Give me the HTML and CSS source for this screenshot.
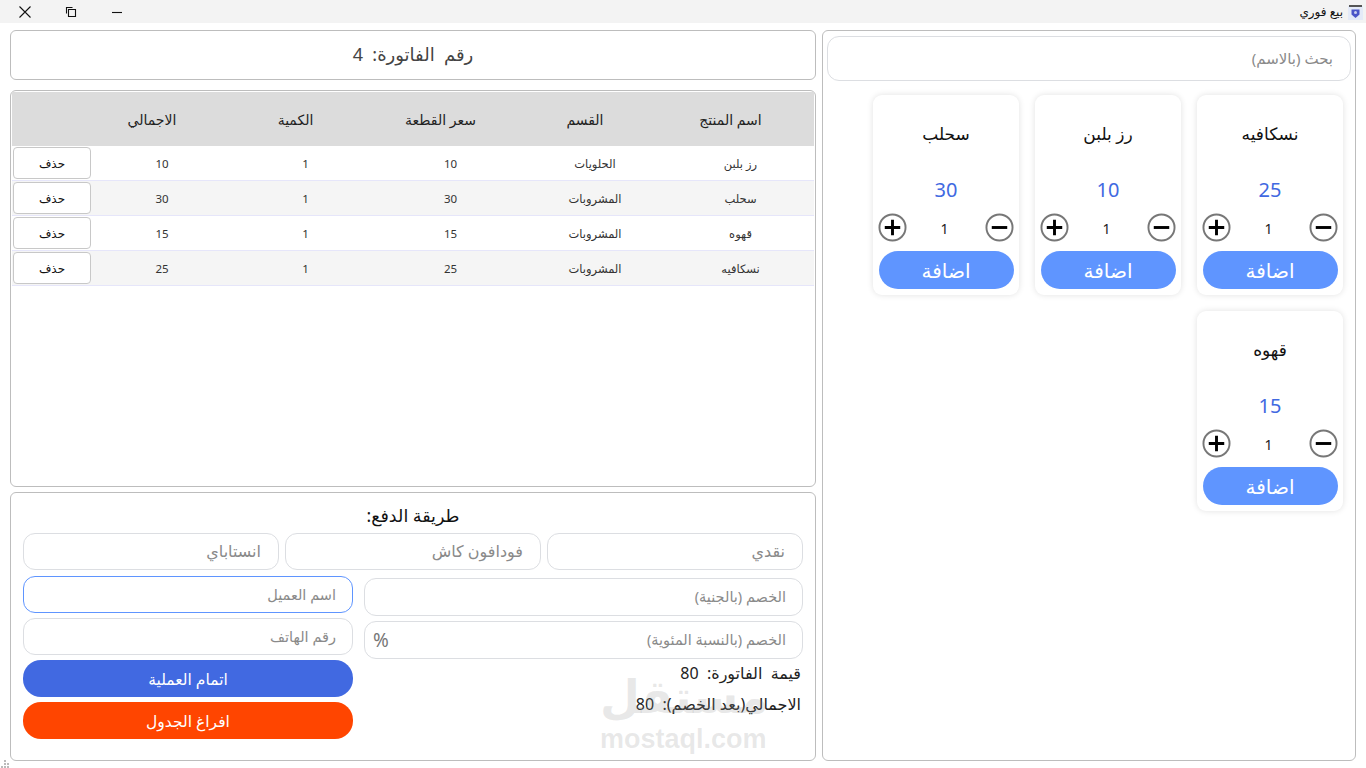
FILE: index.html
```html
<!DOCTYPE html>
<html lang="ar">
<head>
  <meta charset="UTF-8">
  <title>بيع فوري</title>
  <link rel="stylesheet" href="styles.css">
</head>
<body>
  <div class="titlebar">
    <div class="win-buttons">
      <svg class="win-icon" width="14" height="14" viewBox="0 0 14 14"><path d="M1.5 1.5l11 11M12.5 1.5l-11 11" stroke="#111" stroke-width="1.1" fill="none"/></svg>
      <svg class="win-icon" width="14" height="14" viewBox="0 0 14 14"><path d="M4.5 4.5h7v7h-7zM2.5 8.5v-6h6" stroke="#111" stroke-width="1.1" fill="none"/></svg>
      <svg class="win-icon" width="14" height="14" viewBox="0 0 14 14"><path d="M2 7.5h10" stroke="#111" stroke-width="1.1" fill="none"/></svg>
    </div>
    <div class="app-title">
      <span>بيع فوري</span>
      <svg width="15" height="16" viewBox="0 0 15 16"><rect x="0" y="2" width="15" height="14" fill="#e4eaf8"/><path d="M1 1h13v2H1z" fill="#555"/><path d="M3.5 5.5h8v5l-4 3.5-4-3.500z" fill="#4a55c8"/><circle cx="7.500" cy="8.500" r="1.500" fill="#c9cff0"/></svg>
    </div>
  </div>

  <div class="main">
    <div class="panel products">
      <input class="field search" type="text" placeholder="بحث (بالاسم)">
      <div class="card-grid">
        <div class="card">
          <div class="card-name">نسكافيه</div>
          <div class="card-price">25</div>
          <div class="qty-row">
            <svg class="qty-btn" viewBox="0 0 30 30"><circle cx="15" cy="15" r="13.5"/><path d="M7 15h16M15 7v16"/></svg>
            <span class="qty">1</span>
            <svg class="qty-btn" viewBox="0 0 30 30"><circle cx="15" cy="15" r="13.5"/><path d="M7 15h16"/></svg>
          </div>
          <button class="add-btn">اضافة</button>
        </div>
        <div class="card">
          <div class="card-name">رز بلبن</div>
          <div class="card-price">10</div>
          <div class="qty-row">
            <svg class="qty-btn" viewBox="0 0 30 30"><circle cx="15" cy="15" r="13.5"/><path d="M7 15h16M15 7v16"/></svg>
            <span class="qty">1</span>
            <svg class="qty-btn" viewBox="0 0 30 30"><circle cx="15" cy="15" r="13.5"/><path d="M7 15h16"/></svg>
          </div>
          <button class="add-btn">اضافة</button>
        </div>
        <div class="card">
          <div class="card-name">سحلب</div>
          <div class="card-price">30</div>
          <div class="qty-row">
            <svg class="qty-btn" viewBox="0 0 30 30"><circle cx="15" cy="15" r="13.5"/><path d="M7 15h16M15 7v16"/></svg>
            <span class="qty">1</span>
            <svg class="qty-btn" viewBox="0 0 30 30"><circle cx="15" cy="15" r="13.5"/><path d="M7 15h16"/></svg>
          </div>
          <button class="add-btn">اضافة</button>
        </div>
        <div class="card">
          <div class="card-name">قهوه</div>
          <div class="card-price">15</div>
          <div class="qty-row">
            <svg class="qty-btn" viewBox="0 0 30 30"><circle cx="15" cy="15" r="13.5"/><path d="M7 15h16M15 7v16"/></svg>
            <span class="qty">1</span>
            <svg class="qty-btn" viewBox="0 0 30 30"><circle cx="15" cy="15" r="13.5"/><path d="M7 15h16"/></svg>
          </div>
          <button class="add-btn">اضافة</button>
        </div>
      </div>
    </div>

    <div class="sale">
      <div class="panel invoice-no">رقم &nbsp;الفاتورة: &nbsp;4</div>

      <div class="panel invoice-table">
        <table>
          <thead>
            <tr>
              <th class="col-name">اسم المنتج</th>
              <th class="col-cat">القسم</th>
              <th class="col-price">سعر القطعة</th>
              <th class="col-qty">الكمية</th>
              <th class="col-total">الاجمالي</th>
              <th class="col-del"></th>
            </tr>
          </thead>
          <tbody>
            <tr><td>رز بلبن</td><td>الحلويات</td><td>10</td><td>1</td><td>10</td><td><button class="del-btn">حذف</button></td></tr>
            <tr><td>سحلب</td><td>المشروبات</td><td>30</td><td>1</td><td>30</td><td><button class="del-btn">حذف</button></td></tr>
            <tr><td>قهوه</td><td>المشروبات</td><td>15</td><td>1</td><td>15</td><td><button class="del-btn">حذف</button></td></tr>
            <tr><td>نسكافيه</td><td>المشروبات</td><td>25</td><td>1</td><td>25</td><td><button class="del-btn">حذف</button></td></tr>
          </tbody>
        </table>
      </div>

      <div class="panel payment">
        <div class="pay-title">طريقة الدفع:</div>
        <div class="pay-methods">
          <input class="field" type="text" placeholder="نقدي">
          <input class="field" type="text" placeholder="فودافون كاش">
          <input class="field" type="text" placeholder="انستاباي">
        </div>
        <div class="pay-body">
          <div class="pay-discount">
            <input class="field small" type="text" placeholder="الخصم (بالجنية)">
            <div class="percent-wrap">
              <input class="field small" type="text" placeholder="الخصم (بالنسبة المئوية)">
              <span class="percent">%</span>
            </div>
            <div class="sum-line">قيمة &nbsp;الفاتورة: &nbsp;80</div>
            <div class="sum-line">الاجمالي(بعد الخصم): &nbsp;80</div>
          </div>
          <div class="pay-customer">
            <input class="field small focused" type="text" placeholder="اسم العميل">
            <input class="field small" type="text" placeholder="رقم الهاتف">
            <button class="action finish">اتمام العملية</button>
            <button class="action clear">افراغ الجدول</button>
          </div>
        </div>
        <div class="watermark">
          <div class="wm-ar">مستقل</div>
          <div class="wm-en">mostaql.com</div>
        </div>
      </div>
    </div>
  </div>

  <svg class="grip" width="8" height="8" viewBox="0 0 8 8"><path d="M0 6h2v2H0zM3 6h2v2H3zM6 6h2v2H6zM3 3h2v2H3zM6 3h2v2H6zM3 0h2v2H3z" fill="#bbb"/></svg>
</body>
</html>
```

FILE: styles.css
```css
html, body {
  height: 100%;
}
body {
  margin: 0;
  overflow: hidden;
  background-color: #fff;
  color: #222;
  font-family: "Noto Sans", "DejaVu Sans", sans-serif;
  position: relative;
}
input, button {
  font-family: inherit;
}

.titlebar {
  height: 23px;
  background-color: #f3f3f3;
  display: flex;
  justify-content: space-between;
  align-items: center;
  padding: 0 3px 0 18px;
}
.win-buttons {
  display: flex;
  gap: 32px;
}
.app-title {
  display: flex;
  align-items: center;
  gap: 5px;
  font-size: 12px;
  color: #111;
}

.main {
  direction: rtl;
  display: flex;
  gap: 6px;
  height: 731px;
  padding: 7px 10px 0;
}
.panel {
  background-color: #fff;
  border: 1px solid #bdbdbd;
  border-radius: 6px;
  box-sizing: border-box;
}
.field {
  display: block;
  box-sizing: border-box;
  width: 100%;
  height: 37px;
  direction: rtl;
  background-color: #fff;
  border: 1px solid #dcdee2;
  border-radius: 12px;
  padding: 0 17px 2px;
  font-size: 16px;
  color: #222;
  outline: none;
}
.field::placeholder {
  color: #8a8a8a;
  opacity: 1;
}
.field.small {
  font-size: 14.5px;
  padding: 0 16px 2px;
}
.field.focused {
  border-color: #5f95ff;
}

/* products side */
.products {
  width: 534px;
  height: 731px;
  padding: 5px 4px;
}
.search {
  height: 45px;
  font-size: 15px;
}
.card-grid {
  display: flex;
  flex-wrap: wrap;
  gap: 16px;
  padding: 14px 8px 0;
}
.card {
  width: 146px;
  height: 200px;
  box-sizing: border-box;
  padding: 0 5px;
  background-color: #fff;
  border-radius: 9px;
  box-shadow: 0 0 6px rgba(0, 0, 0, 0.12);
  text-align: center;
}
.card-name {
  padding-top: 25px;
  height: 52px;
  font-size: 17px;
  line-height: 27px;
  color: #111;
}
.card-price {
  height: 36px;
  line-height: 36px;
  font-size: 20px;
  color: #4169e1;
}
.qty-row {
  direction: ltr;
  display: flex;
  justify-content: space-between;
  align-items: center;
  height: 30px;
  margin-top: 4px;
}
.qty-btn {
  width: 29px;
  height: 29px;
  flex: none;
}
.qty-btn circle {
  fill: #fff;
  stroke: #777;
  stroke-width: 2;
}
.qty-btn path {
  stroke: #000;
  stroke-width: 3;
  fill: none;
}
.qty {
  font-size: 14px;
  color: #222;
  padding: 3px 3px 0 0;
}
.add-btn {
  display: block;
  width: 135px;
  height: 38px;
  margin: 9px auto 0;
  background-color: #5f95ff;
  border: none;
  border-radius: 19px;
  color: #fff;
  font-size: 20px;
  padding: 0;
}

/* invoice side */
.sale {
  width: 806px;
  display: flex;
  flex-direction: column;
}
.invoice-no {
  height: 50px;
  line-height: 46px;
  text-align: center;
  font-size: 18px;
  color: #444;
  margin-bottom: 10px;
}
.invoice-table {
  height: 397px;
  padding: 1px;
  margin-bottom: 5px;
  overflow: hidden;
}
table {
  width: 100%;
  border-collapse: collapse;
  table-layout: fixed;
}
th {
  box-sizing: border-box;
  height: 54px;
  padding: 0 20px 0 0;
  background-color: #dcdcdc;
  font-size: 14px;
  font-weight: normal;
  color: #222;
}
th.col-name {
  width: 147px;
}
th.col-cat {
  width: 144px;
}
th.col-price, th.col-qty {
  width: 145px;
}
th.col-total {
  width: 142px;
}
th.col-del {
  width: 79px;
  padding: 0;
}
td {
  height: 34px;
  padding: 0;
  text-align: center;
  font-size: 11.500px;
  color: #333;
  border-bottom: 1px solid #e6e6fa;
}
tbody tr:nth-child(even) {
  background-color: #f5f5f5;
}
.del-btn {
  display: block;
  width: 78px;
  height: 32px;
  margin-left: 1px;
  background-color: #fff;
  border: 1px solid #c8c8c8;
  border-radius: 4px;
  font-size: 12px;
  color: #111;
  padding: 0;
}

.payment {
  height: 269px;
  padding: 0 12px;
  position: relative;
}
.pay-title {
  height: 40px;
  line-height: 44px;
  text-align: center;
  font-size: 17.500px;
  color: #111;
}
.pay-methods {
  display: flex;
  gap: 6px;
}
.pay-body {
  display: flex;
  gap: 11px;
  margin-top: 6px;
}
.pay-discount {
  width: 439px;
  padding-top: 2px;
}
.pay-discount .field {
  height: 38px;
}
.percent-wrap {
  position: relative;
  margin-top: 5px;
}
.percent {
  position: absolute;
  left: 9px;
  top: 6px;
  font-size: 19px;
  color: #777;
}
.sum-line {
  font-size: 16px;
  color: #222;
  height: 31px;
  line-height: 29px;
  padding-right: 2px;
}
.pay-customer {
  width: 330px;
  display: flex;
  flex-direction: column;
  gap: 5px;
}
.action {
  width: 100%;
  height: 37px;
  border: none;
  border-radius: 18px;
  color: #fff;
  font-size: 15.500px;
  padding: 0;
}
.action.finish {
  background-color: #4169e1;
}
.action.clear {
  background-color: #ff4500;
}
.watermark {
  position: absolute;
  left: 589px;
  top: 178px;
  width: 166px;
  direction: ltr;
  text-align: center;
  color: rgba(150, 150, 150, 0.22);
  font-family: "Liberation Sans", "DejaVu Sans", sans-serif;
  font-weight: bold;
  pointer-events: none;
}
.wm-ar {
  font-size: 46px;
  line-height: 52px;
  font-family: "DejaVu Sans", sans-serif;
}
.wm-en {
  font-size: 27px;
  line-height: 32px;
}
.grip {
  position: absolute;
  left: 1px;
  bottom: 0;
}
```
